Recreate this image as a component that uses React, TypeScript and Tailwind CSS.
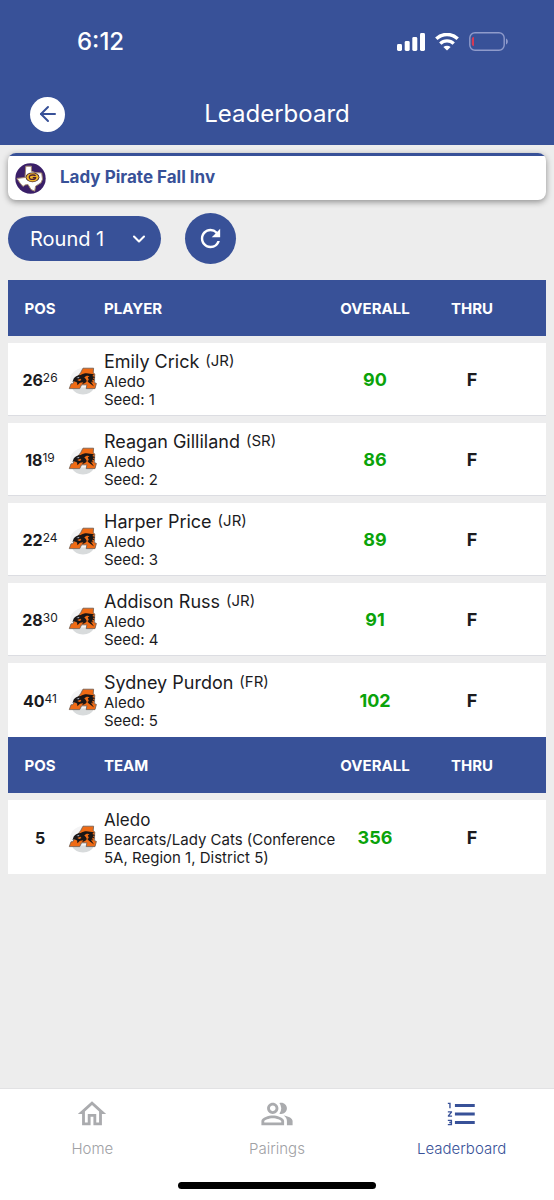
import type { ReactNode } from 'react'
import { ArrowLeft, ChevronDown } from 'lucide-react'
import { MdFormatListNumbered, MdOutlineHome, MdOutlinePeopleAlt, MdRefresh } from 'react-icons/md'

type Player = {
  pos: number
  previous: number
  name: string
  grade: string
  seed: number
  score: number
}

const players: Player[] = [
  { pos: 26, previous: 26, name: 'Emily Crick', grade: 'JR', seed: 1, score: 90 },
  { pos: 18, previous: 19, name: 'Reagan Gilliland', grade: 'SR', seed: 2, score: 86 },
  { pos: 22, previous: 24, name: 'Harper Price', grade: 'JR', seed: 3, score: 89 },
  { pos: 28, previous: 30, name: 'Addison Russ', grade: 'JR', seed: 4, score: 91 },
  { pos: 40, previous: 41, name: 'Sydney Purdon', grade: 'FR', seed: 5, score: 102 },
]

function StatusBar() {
  return (
    <div className="flex h-[83px] items-center justify-between pr-[46px] pl-[77px] text-white">
      <span className="text-2xl font-medium">6:12</span>
      <div className="flex items-center gap-[10px]">
        <svg width="28" height="18" viewBox="0 0 28 18" fill="currentColor" aria-hidden="true">
          <rect x="0" y="11" width="5" height="7" rx="1.4" />
          <rect x="7.7" y="8" width="5" height="10" rx="1.4" />
          <rect x="15.3" y="4" width="5" height="14" rx="1.4" />
          <rect x="23" y="0" width="5" height="18" rx="1.4" />
        </svg>
        <svg width="24" height="18" viewBox="0 0 24 18" fill="none" stroke="currentColor" strokeWidth="3.4" aria-hidden="true">
          <path d="M1.3 5.800a15.3 15.3 0 0 1 21.4 0" />
          <path d="M5.3 10.6a9.6 9.6 0 0 1 13.4 0" />
          <path d="M12 17.6l-3.6-3.5a5.2 5.2 0 0 1 7.2 0z" fill="currentColor" stroke="none" />
        </svg>
        <svg width="39" height="19" viewBox="0 0 39 19" fill="none" aria-hidden="true">
          <rect x="0.8" y="0.8" width="34.4" height="17.4" rx="5.2" stroke="#8f9bcb" strokeWidth="1.4" />
          <path d="M5 5v9c-1.500 0-2.200-.8-2.200-2.200V7.200C2.800 5.800 3.500 5 5 5z" fill="#d43a55" />
          <path d="M37 6.600c1.300.5 1.800 1.600 1.800 2.900s-.5 2.400-1.800 2.900z" fill="#8f9bcb" />
        </svg>
      </div>
    </div>
  )
}

function EventLogo() {
  return (
    <svg className="size-[31px] shrink-0" viewBox="0 0 31 31" aria-hidden="true">
      <circle cx="15.500" cy="15.500" r="15.200" fill="#3a1f68" />
      <path
        d="M10.800 3.200h5.600v5l3.800 1.400 6.500.4.800 6.200-1.500 3.600-5.400 3.400-.9 5-3.700-1.700-3-5-2.800.4-2.100 1.500-2.600-2.600-3-4.600L2 15.400l8-.9z"
        fill="#fff"
        stroke="#a48a70"
        strokeWidth="1"
      />
      <ellipse cx="17.500" cy="14.300" rx="6.900" ry="4.900" fill="#4a2a35" />
      <ellipse cx="17.500" cy="14.300" rx="6" ry="4.100" fill="#f0b52b" />
      <path
        d="M20.600 12.700c-1-1-5.600-1.100-6.200.8-.5 2 1 2.900 3 2.900 1.900 0 3.100-.5 3.200-1.800h-2.800"
        fill="none"
        stroke="#4a2035"
        strokeWidth="1.300"
      />
    </svg>
  )
}

function TeamLogo() {
  return (
    <svg className="size-8" viewBox="0 0 32 32" aria-hidden="true">
      <circle cx="15" cy="17" r="13" fill="#f4f4f5" />
      <path d="M3.500 23.500a13 13 0 0 0 23 0z" fill="#d8dbdc" />
      <path
        d="M15 4.200h10.600l-.4 4.600 1.600 1.200-.6 8.600 2.200.8-1.400 5.200h-8.800l.7-3.800h-5.300l-1.900 3.800H1.300l1.700-4.800h1.500l8.300-11.400z"
        fill="#ef6b15"
        stroke="#6a5a50"
        strokeWidth="0.800"
      />
      {/* Bearcat head */}
      <path
        d="M5.700 14.500c1.700-2.300 4-3.500 7-3.500 2.600-1.900 6.500-2.300 9.500-1.200l3.800.4-1.700 1.900 3 1.100-2.500.8 1.800 2.200-2.500-.4.8 2.600-2.100-.8 3.200 4.900-5.300-3.900-1.600-1.900-1.700 2-3.300 1.600 1.100-2-3.200.4-2.600 2.500-.3-2.800-2.700-1.200-1.900.7z"
        fill="#1a1616"
      />
      <path d="M16.300 13.600c1.500-1.800 3.500-2.300 5.200-1.200l-1.700.9 1 2.800-1.900 1.100-1.100-2.200zM9.200 16l3.300-1.300.9 1.300-2 1z" fill="#ef6b15" />
      <path d="M8.400 14l3.200-1.200-.9 1.500z" fill="#b8c4dc" />
    </svg>
  )
}

function ScoreTable({ label, children }: { label: string; children: ReactNode }) {
  return (
    <table className="w-full table-fixed border-separate border-spacing-0 text-[#1b1b1e]">
      <colgroup>
        <col className="w-15" />
        <col className="w-9" />
        <col />
        <col className="w-[74px]" />
        <col className="w-[134px]" />
      </colgroup>
      <thead>
        <tr className="h-14 bg-[#385198] text-[15px] text-white [&>th]:pt-0.5">
          <th scope="col" className="pl-1 font-bold">POS</th>
          <th scope="col" aria-label="Logo" />
          <th scope="col" className="text-left font-bold">{label}</th>
          <th scope="col" className="font-bold">OVERALL</th>
          <th scope="col" className="pr-[14px] font-bold">THRU</th>
        </tr>
      </thead>
      <tbody>{children}</tbody>
    </table>
  )
}

type ScoreRowProps = {
  pos: number
  previous?: number
  score: number
  children: ReactNode
}

function ScoreRow({ pos, previous, score, children }: ScoreRowProps) {
  return (
    <tr className="h-20 bg-white last:h-[81px] [&>td]:border-t-[7px] [&>td]:border-b [&>td]:border-t-[#ededee] [&>td]:border-b-[#dcdde2] [&>td]:pt-0.5 last:[&>td]:border-b-white">
      <td className="pl-1">
        <div className="flex justify-center">
          <span className="text-base leading-5 font-bold">{pos}</span>
          {previous && <span className="text-xs leading-4">{previous}</span>}
        </div>
      </td>
      <td><TeamLogo /></td>
      <td className="text-[15px] leading-[18px]">{children}</td>
      <td className="text-center text-lg font-bold text-[#0aa30a]">{score}</td>
      <td className="pr-[14px] text-center text-lg font-bold">F</td>
    </tr>
  )
}

function BottomNav() {
  const item = 'flex flex-1 flex-col items-center gap-2 pt-2 text-[15px] leading-5 font-light'
  return (
    <footer className="border-t border-[#e2e2e4] bg-white">
      <nav className="flex h-[93px]">
        <a href="#home" className={`${item} text-[#a0a1a5]`}>
          <MdOutlineHome className="size-[34px] text-[#aaabae]" />
          Home
        </a>
        <a href="#pairings" className={`${item} text-[#a0a1a5]`}>
          <MdOutlinePeopleAlt className="size-[34px] text-[#aaabae]" />
          Pairings
        </a>
        <a href="#leaderboard" aria-current="page" className={`${item} text-[#385198]`}>
          <MdFormatListNumbered className="size-[34px]" />
          Leaderboard
        </a>
      </nav>
      <div className="mx-auto mb-[11px] h-[7px] w-[198px] rounded-full bg-black" />
    </footer>
  )
}

export default function App() {
  return (
    <div className="flex min-h-screen flex-col bg-[#ededed] font-['Inter',sans-serif]">
      <header className="bg-[#385198]">
        <StatusBar />
        <div className="grid h-[62px] grid-cols-[1fr_auto_1fr] items-center px-[30px]">
          <button type="button" aria-label="Back" className="flex size-[35px] items-center justify-center rounded-full bg-white text-[#385198]">
            <ArrowLeft className="size-6" strokeWidth={2} />
          </button>
          <h1 className="text-2xl text-white">Leaderboard</h1>
        </div>
      </header>

      <main className="flex-1 px-2 pt-2">
        <section className="overflow-hidden rounded-lg bg-white shadow-[0_2px_6px_rgba(0,0,0,0.4)]">
          <div className="flex h-[47px] items-center gap-[14px] border-t-3 border-[#385198] pl-[7px]">
            <EventLogo />
            <h2 className="text-[17px] font-bold text-[#385198]">Lady Pirate Fall Inv</h2>
          </div>
        </section>

        {/* Round picker */}
        <div className="flex items-center gap-6 pt-[13px] pb-4">
          <div className="relative">
            <select aria-label="Round" className="h-[45px] w-[153px] appearance-none rounded-full bg-[#385198] pl-[22px] text-xl text-white">
              <option>Round 1</option>
            </select>
            <ChevronDown className="pointer-events-none absolute top-[13px] right-3 size-5 text-white" strokeWidth={2.5} />
          </div>
          <button type="button" aria-label="Refresh" className="flex size-[51px] items-center justify-center rounded-full bg-[#385198] text-white">
            <MdRefresh className="size-[29px]" />
          </button>
        </div>

        <ScoreTable label="PLAYER">
          {players.map((player) => (
            <ScoreRow key={player.seed} pos={player.pos} previous={player.previous} score={player.score}>
              <p className="flex gap-1.5">
                <span className="text-lg leading-[22px]">{player.name}</span>
                <span className="leading-5">({player.grade})</span>
              </p>
              <p>Aledo</p>
              <p>Seed: {player.seed}</p>
            </ScoreRow>
          ))}
        </ScoreTable>

        <ScoreTable label="TEAM">
          <ScoreRow pos={5} score={356}>
            <p className="text-[17px] leading-[22px]">Aledo</p>
            <p>Bearcats/Lady Cats (Conference 5A, Region 1, District 5)</p>
          </ScoreRow>
        </ScoreTable>
      </main>

      <BottomNav />
    </div>
  )
}
